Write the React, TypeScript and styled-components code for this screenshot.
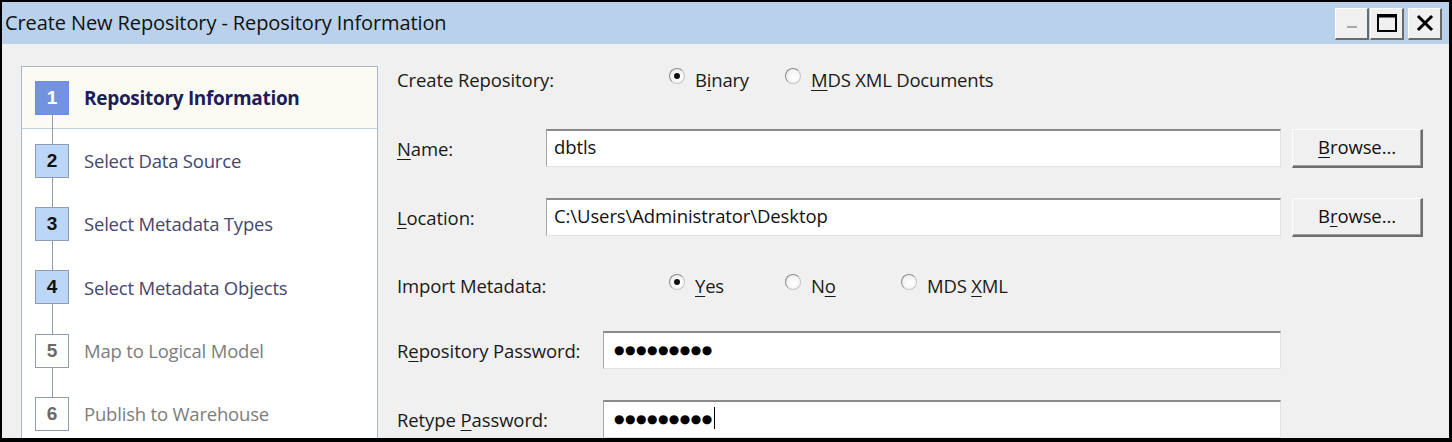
import React from "react";
import styled, { createGlobalStyle, css } from "styled-components";

const Global = createGlobalStyle`
  html, body { margin: 0; padding: 0; background: #000; }
  body { font-family: "Open Sans", "Noto Sans", sans-serif; }
  * { box-sizing: border-box; }
`;

const Frame = styled.div`
  width: 1452px;
  height: 442px;
  overflow: hidden;
  background: #f0f0f0;
  border-style: solid;
  border-color: #000;
  border-width: 2px 3px 4px 2px;
  display: flex;
  flex-direction: column;
`;

const TitleBar = styled.div`
  height: 42px;
  flex: none;
  background: #b9d1ea;
  display: flex;
  align-items: center;
  justify-content: space-between;
  padding: 0 7px 0 3px;
`;

const Title = styled.div`
  font-size: 20px;
  color: #111;
  letter-spacing: -0.1px;
  margin-top: -2px;
`;

const WinButtons = styled.div`
  display: flex;
  gap: 1px;
  align-items: center;
  margin-top: 1px;
`;

const WinBtn = styled.div<{ $gapLeft?: number }>`
  width: 34px;
  height: 32px;
  margin-left: ${(p) => p.$gapLeft ?? 0}px;
  background: #f0f0f0;
  border-top: 1px solid #fff;
  border-left: 1px solid #fff;
  border-right: 2px solid #6a6a6a;
  border-bottom: 2px solid #6a6a6a;
  display: flex;
  align-items: center;
  justify-content: center;
`;

const Body = styled.div`
  flex: 1;
  display: flex;
  align-items: flex-start;
  padding-left: 19px;
`;

const Panel = styled.div`
  width: 357px;
  height: 420px;
  margin-top: 22px;
  background: #fff;
  border: 1px solid #a9b6cc;
  flex: none;
`;

const Step = styled.div<{ $active?: boolean; $last?: boolean }>`
  position: relative;
  display: flex;
  align-items: center;
  gap: 15px;
  padding-left: 13px;
  height: ${(p) => (p.$active ? "62px" : "63.3px")};
  ${(p) =>
    p.$active &&
    css`
      background: #fbfbf4;
      border-bottom: 1px solid #c6cfdc;
    `}
  &::after {
    content: "";
    display: ${(p) => (p.$last ? "none" : "block")};
    position: absolute;
    left: 30px;
    top: calc(50% + 17px);
    height: 30px;
    width: 1px;
    background: #8d9bb3;
  }
`;

type Tone = "current" | "done" | "todo";

const StepBox = styled.div<{ $tone: Tone }>`
  width: 34px;
  height: 34px;
  flex: none;
  display: flex;
  align-items: center;
  justify-content: center;
  font-weight: 700;
  font-size: 19px;
  border: 1px solid
    ${(p) => (p.$tone === "current" ? "#6f8fd6" : "#8e9cb4")};
  background: ${(p) =>
    p.$tone === "current" ? "#7393e0" : p.$tone === "done" ? "#bcd6f8" : "#fff"};
  color: ${(p) =>
    p.$tone === "current" ? "#fff" : p.$tone === "done" ? "#111" : "#6a6a6a"};
  font-family: "Liberation Sans", Arial, sans-serif;
`;

const StepLabel = styled.div<{ $tone: Tone }>`
  font-size: ${(p) => (p.$tone === "current" ? "19px" : "18.5px")};
  font-weight: ${(p) => (p.$tone === "current" ? 700 : 400)};
  letter-spacing: ${(p) => (p.$tone === "current" ? "-0.3px" : "-0.2px")};
  color: ${(p) =>
    p.$tone === "current" ? "#1c1d5a" : p.$tone === "done" ? "#44476e" : "#7d7d7d"};
`;

const Form = styled.div`
  margin-left: 19px;
  padding-top: 16px;
  width: 1026px;
  display: flex;
  flex-direction: column;
  gap: 31px;
`;

const Row = styled.div<{ $h?: number; $reserve?: boolean }>`
  display: flex;
  align-items: center;
  height: ${(p) => p.$h ?? 38}px;
  padding-right: ${(p) => (p.$reserve ? 142 : 0)}px;
`;

const Label = styled.div<{ $w: number }>`
  width: ${(p) => p.$w}px;
  flex: none;
  font-size: 18.5px;
  color: #1a1a1a;
  letter-spacing: -0.1px;
`;

const U = styled.span`
  text-decoration: underline;
  text-underline-offset: 3px;
`;

const Field = styled.div`
  flex: 1;
  height: 38px;
  background: #fff;
  border-top: 2px solid #8a8a8a;
  border-left: 1px solid #a5a5a5;
  border-right: 1px solid #e2e2e2;
  border-bottom: 1px solid #e2e2e2;
  display: flex;
  align-items: center;
  padding-left: 7px;
  padding-bottom: 4px;
  font-size: 18.5px;
  color: #111;
  letter-spacing: -0.1px;
`;

const Dots = styled.span`
  font-family: "DejaVu Sans", sans-serif;
  font-size: 12px;
  letter-spacing: 0.5px;
  color: #000;
  padding-left: 3px;
  padding-top: 3px;
`;

const Caret = styled.span`
  display: inline-block;
  width: 1px;
  height: 22px;
  background: #000;
  margin-left: 1px;
  vertical-align: middle;
`;

const Button = styled.div`
  width: 131px;
  height: 39px;
  margin-left: 11px;
  flex: none;
  background: #f0f0f0;
  border-top: 1px solid #fcfcfc;
  border-left: 1px solid #fcfcfc;
  border-right: 2px solid #6d6d6d;
  border-bottom: 2px solid #6d6d6d;
  box-shadow: inset -1px -1px 0 #a0a0a0;
  display: flex;
  align-items: center;
  justify-content: center;
  font-size: 18.5px;
  color: #111;
  letter-spacing: -0.1px;
  padding-bottom: 3px;
`;

const RadioGroup = styled.div`
  display: flex;
  align-items: center;
`;

const RadioItem = styled.div<{ $w?: number }>`
  display: flex;
  align-items: center;
  gap: 10px;
  width: ${(p) => (p.$w ? `${p.$w}px` : "auto")};
  font-size: 18.5px;
  color: #1a1a1a;
  letter-spacing: -0.2px;
`;

const Circle = styled.span<{ $on?: boolean }>`
  width: 16px;
  height: 16px;
  border-radius: 50%;
  flex: none;
  margin-top: -6px;
  background: radial-gradient(circle at 60% 60%, #ffffff 0%, #f4f4f4 55%, #e2e2e2 100%);
  border: 1px solid #c4c4c4;
  border-top-color: #8c8c8c;
  border-left-color: #8c8c8c;
  display: flex;
  align-items: center;
  justify-content: center;
  &::after {
    content: "";
    display: ${(p) => (p.$on ? "block" : "none")};
    width: 6px;
    height: 6px;
    border-radius: 50%;
    background: #111;
  }
`;

const steps: { n: number; label: string; tone: Tone }[] = [
  { n: 1, label: "Repository Information", tone: "current" },
  { n: 2, label: "Select Data Source", tone: "done" },
  { n: 3, label: "Select Metadata Types", tone: "done" },
  { n: 4, label: "Select Metadata Objects", tone: "done" },
  { n: 5, label: "Map to Logical Model", tone: "todo" },
  { n: 6, label: "Publish to Warehouse", tone: "todo" },
];

export default function App() {
  return (
    <>
      <Global />
      <Frame>
        <TitleBar>
          <Title>Create New Repository - Repository Information</Title>
          <WinButtons>
            <WinBtn>
              <svg width="14" height="14" viewBox="0 0 14 14">
                <rect x="2" y="10" width="10" height="2" fill="#a8a8a8" />
              </svg>
            </WinBtn>
            <WinBtn>
              <svg width="22" height="20" viewBox="0 0 22 20">
                <rect x="2" y="2" width="18" height="16" fill="none" stroke="#000" strokeWidth="2" />
                <rect x="2" y="2" width="18" height="2.5" fill="#000" />
              </svg>
            </WinBtn>
            <WinBtn $gapLeft={3}>
              <svg width="18" height="18" viewBox="0 0 18 18">
                <path d="M3 3 L15 15 M15 3 L3 15" stroke="#000" strokeWidth="3" strokeLinecap="square" />
              </svg>
            </WinBtn>
          </WinButtons>
        </TitleBar>
        <Body>
          <Panel>
            {steps.map((s, i) => (
              <Step key={s.n} $active={s.tone === "current"} $last={i === steps.length - 1}>
                <StepBox $tone={s.tone}>{s.n}</StepBox>
                <StepLabel $tone={s.tone}>{s.label}</StepLabel>
              </Step>
            ))}
          </Panel>
          <Form>
            <Row>
              <Label $w={272}>Create Repository:</Label>
              <RadioGroup>
                <RadioItem $w={116}>
                  <Circle $on />
                  <span>
                    B<U>i</U>nary
                  </span>
                </RadioItem>
                <RadioItem>
                  <Circle />
                  <span>
                    <U>M</U>DS XML Documents
                  </span>
                </RadioItem>
              </RadioGroup>
            </Row>
            <Row>
              <Label $w={149}>
                <U>N</U>ame:
              </Label>
              <Field>dbtls</Field>
              <Button>
                <span>
                  <U>B</U>rowse...
                </span>
              </Button>
            </Row>
            <Row>
              <Label $w={149}>
                <U>L</U>ocation:
              </Label>
              <Field>C:\Users\Administrator\Desktop</Field>
              <Button>
                <span>
                  B<U>r</U>owse...
                </span>
              </Button>
            </Row>
            <Row $h={36}>
              <Label $w={272}>Import Metadata:</Label>
              <RadioGroup>
                <RadioItem $w={116}>
                  <Circle $on />
                  <span>
                    <U>Y</U>es
                  </span>
                </RadioItem>
                <RadioItem $w={116}>
                  <Circle />
                  <span>
                    N<U>o</U>
                  </span>
                </RadioItem>
                <RadioItem>
                  <Circle />
                  <span>
                    MDS <U>X</U>ML
                  </span>
                </RadioItem>
              </RadioGroup>
            </Row>
            <Row $reserve style={{ marginTop: -3 }}>
              <Label $w={206}>
                R<U>e</U>pository Password:
              </Label>
              <Field>
                <Dots>●●●●●●●●●</Dots>
              </Field>
            </Row>
            <Row $reserve>
              <Label $w={206}>
                Retype <U>P</U>assword:
              </Label>
              <Field>
                <Dots>●●●●●●●●●</Dots>
                <Caret />
              </Field>
            </Row>
          </Form>
        </Body>
      </Frame>
    </>
  );
}
